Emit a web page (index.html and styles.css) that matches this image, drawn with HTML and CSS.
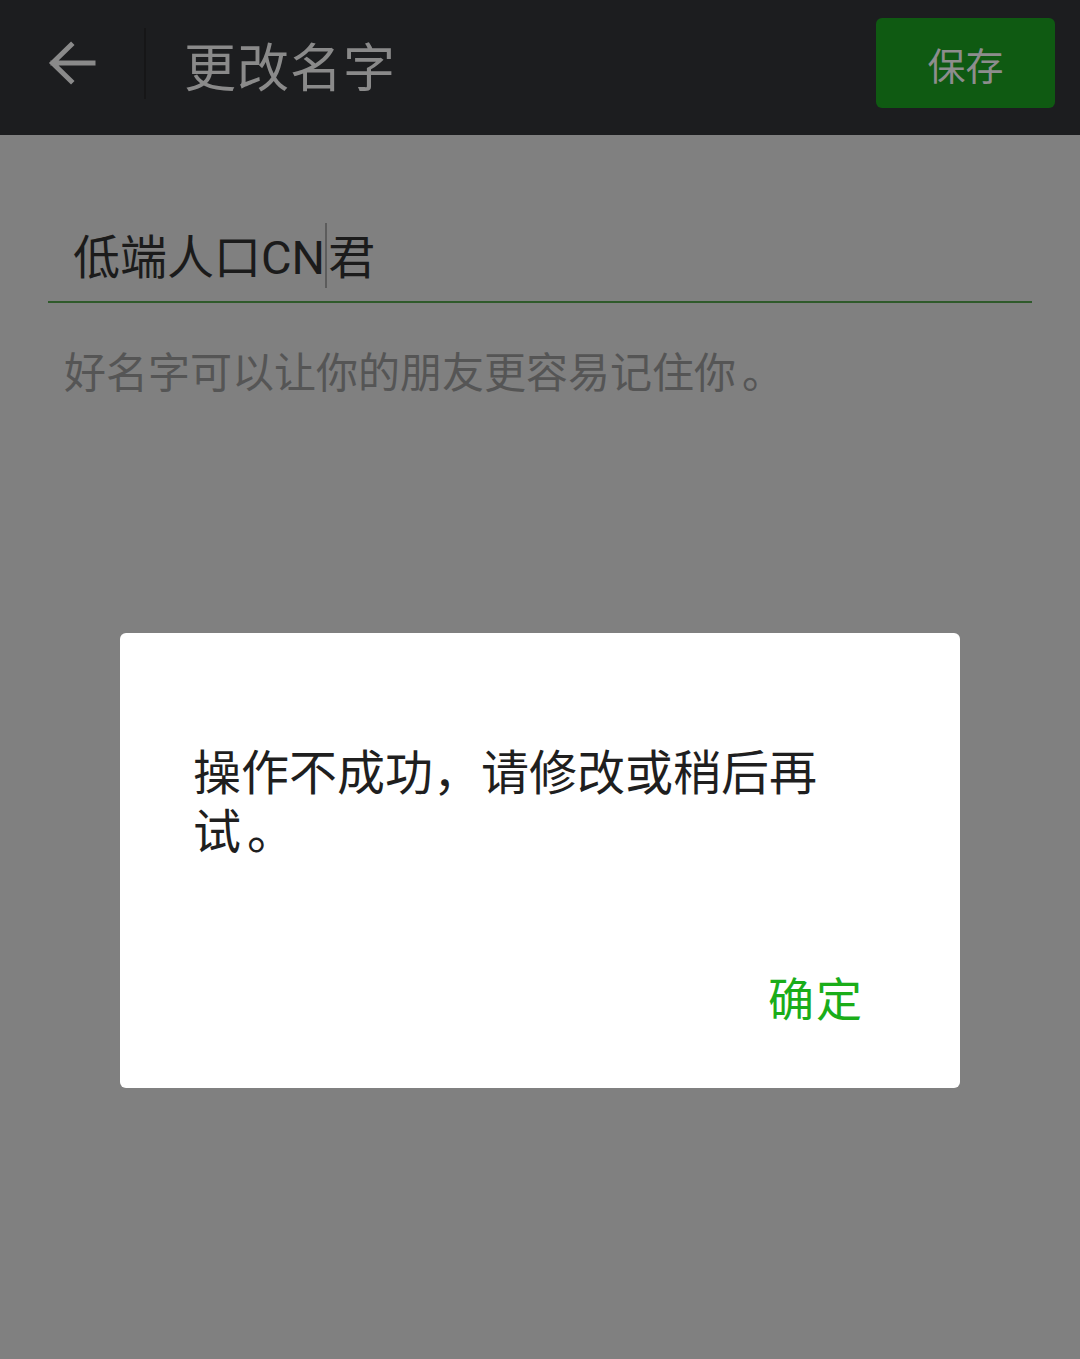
FILE: index.html
```html
<!DOCTYPE html>
<html lang="zh-CN">
<head>
<meta charset="utf-8">
<title>更改名字</title>
<link rel="stylesheet" href="styles.css">
</head>
<body>
<div class="screen">
  <header class="topbar">
    <div class="back">
      <svg width="50" height="50" viewBox="0 0 50 50" aria-hidden="true">
        <path d="M46 24H6 M24 6 L5.5 24 L24 42" fill="none" stroke="#8a8a8a" stroke-width="5" stroke-linecap="square" stroke-linejoin="miter"/>
      </svg>
    </div>
    <div class="divider"></div>
    <h1 class="title">更改名字</h1>
    <button class="save">保存</button>
  </header>
  <main class="content">
    <div class="field">
      <span class="value">低端人口CN</span><span class="cursor"></span><span class="value">君</span>
    </div>
    <p class="hint">好名字可以让你的朋友更容易记住你<span class="period">。</span></p>
  </main>
  <div class="dialog">
    <p class="message">操作不成功，请修改或稍后再<span class="nobr">试<span class="period">。</span></span></p>
    <div class="actions"><span class="ok">确定</span></div>
  </div>
</div>
</body>
</html>
```
FILE: styles.css
```css
html, body {
  margin: 0;
  padding: 0;
}
body {
  width: 1080px;
  height: 1359px;
  background: #808080;
  font-family: Roboto, "Noto Sans CJK SC", sans-serif;
  overflow: hidden;
}
.screen {
  position: relative;
  width: 1080px;
  height: 1359px;
  background: #808080;
}
.topbar {
  height: 135px;
  background: #1c1d1f;
  display: flex;
  align-items: center;
  box-sizing: border-box;
  padding-right: 25px;
}
.back {
  width: 144px;
  height: 135px;
  display: flex;
  align-items: center;
  padding-left: 47px;
  box-sizing: border-box;
}
.back svg {
  display: block;
  margin-top: -8px;
}
.divider {
  width: 2px;
  height: 71px;
  background: #161617;
  margin-top: -8px;
}
.title {
  margin: 0 0 0 38px;
  font-weight: normal;
  font-size: 52px;
  color: #8a8a8a;
  letter-spacing: 1px;
  flex: 1;
  margin-top: -6px;
}
.save {
  width: 179px;
  height: 90px;
  margin-top: -10px;
  border: none;
  border-radius: 6px;
  background: #0f5a12;
  color: #8d8d8d;
  font-family: Roboto, "Noto Sans CJK SC", sans-serif;
  font-size: 38px;
  padding: 0;
  padding-top: 2px;
}
.content {
  padding: 0 48px;
}
.field {
  margin-top: 90px;
  height: 64px;
  padding-bottom: 12px;
  border-bottom: 2px solid #2f5a2b;
  display: flex;
  align-items: center;
  padding-left: 25px;
}
.value {
  font-size: 47px;
  color: #1b1b1b;
  line-height: 1;
}
.cursor {
  display: inline-block;
  width: 2px;
  height: 65px;
  background: #5c5c5c;
  margin: 0 1px 0 0;
  position: relative;
  top: -2px;
}
.hint {
  margin: 46px 0 0 16px;
  font-size: 42px;
  color: #555555;
  line-height: 1.2;
  white-space: nowrap;
}
.period {
  display: inline-block;
  padding-left: 6px;
}
.nobr {
  white-space: nowrap;
}
.dialog {
  position: absolute;
  left: 120px;
  top: 633px;
  width: 840px;
  height: 455px;
  background: #ffffff;
  border-radius: 6px;
  box-sizing: border-box;
  padding: 111px 73px 0 73px;
  display: flex;
  flex-direction: column;
}
.message {
  margin: 0;
  font-size: 48px;
  line-height: 59px;
  color: #1f1f1f;
}
.actions {
  margin-top: auto;
  display: flex;
  justify-content: flex-end;
  padding-right: 23px;
  padding-bottom: 65px;
}
.ok {
  font-size: 46px;
  color: #1aad19;
  line-height: 1;
  letter-spacing: 2px;
}
```
